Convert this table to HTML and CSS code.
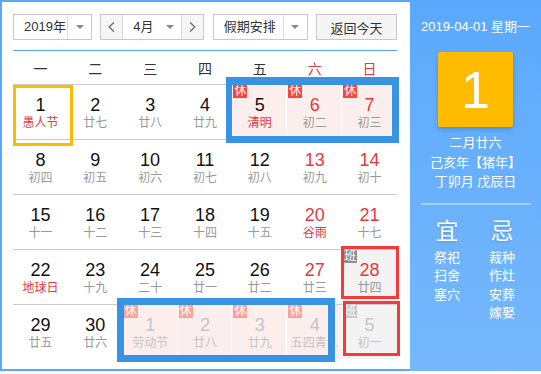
FILE: index.html
```html
<!DOCTYPE html>
<html lang="zh-CN">
<head>
<meta charset="utf-8">
<link rel="stylesheet" href="styles.css">
</head>
<body>
<div class="widget">
  <div class="main">
    <div class="toolbar">
      <div class="sel year"><span class="sel-text">2019年</span><span class="sel-arrow"><i class="tri"></i></span></div>
      <div class="month-group">
        <span class="nav prev"><svg width="7" height="10" viewBox="0 0 7 10"><polyline points="5.8,0.5 1.2,5 5.8,9.5" fill="none" stroke="#666" stroke-width="1.2"/></svg></span>
        <div class="month"><span class="sel-text">4月</span><span class="sel-arrow plain"><i class="tri"></i></span></div>
        <span class="nav next"><svg width="7" height="10" viewBox="0 0 7 10"><polyline points="1.2,0.5 5.8,5 1.2,9.5" fill="none" stroke="#666" stroke-width="1.2"/></svg></span>
      </div>
      <div class="sel holiday"><span class="sel-text">假期安排</span><span class="sel-arrow"><i class="tri"></i></span></div>
      <button class="today-btn">返回今天</button>
    </div>
    <div class="weekdays">
      <span>一</span><span>二</span><span>三</span><span>四</span><span>五</span><span class="we">六</span><span class="we">日</span>
    </div>
    <div class="days">
      <div class="week">
        <div class="cell today"><span class="num">1</span><span class="lu fest">愚人节</span></div>
        <div class="cell"><span class="num">2</span><span class="lu">廿七</span></div>
        <div class="cell"><span class="num">3</span><span class="lu">廿八</span></div>
        <div class="cell"><span class="num">4</span><span class="lu">廿九</span></div>
        <div class="cell hol"><span class="badge">休</span><span class="num">5</span><span class="lu fest">清明</span></div>
        <div class="cell hol red"><span class="badge">休</span><span class="num">6</span><span class="lu">初二</span></div>
        <div class="cell hol red"><span class="badge">休</span><span class="num">7</span><span class="lu">初三</span></div>
      </div>
      <div class="week">
        <div class="cell"><span class="num">8</span><span class="lu">初四</span></div>
        <div class="cell"><span class="num">9</span><span class="lu">初五</span></div>
        <div class="cell"><span class="num">10</span><span class="lu">初六</span></div>
        <div class="cell"><span class="num">11</span><span class="lu">初七</span></div>
        <div class="cell"><span class="num">12</span><span class="lu">初八</span></div>
        <div class="cell red"><span class="num">13</span><span class="lu">初九</span></div>
        <div class="cell red"><span class="num">14</span><span class="lu">初十</span></div>
      </div>
      <div class="week">
        <div class="cell"><span class="num">15</span><span class="lu">十一</span></div>
        <div class="cell"><span class="num">16</span><span class="lu">十二</span></div>
        <div class="cell"><span class="num">17</span><span class="lu">十三</span></div>
        <div class="cell"><span class="num">18</span><span class="lu">十四</span></div>
        <div class="cell"><span class="num">19</span><span class="lu">十五</span></div>
        <div class="cell red"><span class="num">20</span><span class="lu fest">谷雨</span></div>
        <div class="cell red"><span class="num">21</span><span class="lu">十七</span></div>
      </div>
      <div class="week">
        <div class="cell"><span class="num">22</span><span class="lu fest">地球日</span></div>
        <div class="cell"><span class="num">23</span><span class="lu">十九</span></div>
        <div class="cell"><span class="num">24</span><span class="lu">二十</span></div>
        <div class="cell"><span class="num">25</span><span class="lu">廿一</span></div>
        <div class="cell"><span class="num">26</span><span class="lu">廿二</span></div>
        <div class="cell red"><span class="num">27</span><span class="lu">廿三</span></div>
        <div class="cell red work"><span class="badge ban">班</span><span class="num">28</span><span class="lu">廿四</span></div>
      </div>
      <div class="week last">
        <div class="cell"><span class="num">29</span><span class="lu">廿五</span></div>
        <div class="cell"><span class="num">30</span><span class="lu">廿六</span></div>
        <div class="cell hol other"><span class="badge">休</span><span class="num">1</span><span class="lu">劳动节</span></div>
        <div class="cell hol other"><span class="badge">休</span><span class="num">2</span><span class="lu">廿八</span></div>
        <div class="cell hol other"><span class="badge">休</span><span class="num">3</span><span class="lu">廿九</span></div>
        <div class="cell hol other"><span class="badge">休</span><span class="num">4</span><span class="lu">五四青<span class="ell">…</span></span></div>
        <div class="cell work other"><span class="badge ban">班</span><span class="num">5</span><span class="lu">初一</span></div>
      </div>
      <div class="mark blue mark-a"></div>
      <div class="mark blue mark-b"></div>
      <div class="mark redbox mark-c"></div>
      <div class="mark redbox mark-d"></div>
    </div>
  </div>
  <div class="side">
    <div class="side-date">2019-04-01 星期一</div>
    <div class="big-day">1</div>
    <div class="lunar-info">
      <div>二月廿六</div>
      <div>己亥年【猪年】</div>
      <div>丁卯月 戊辰日</div>
    </div>
    <div class="divider"></div>
    <div class="yiji">
      <div class="col"><div class="yj-title">宜</div><div>祭祀</div><div>扫舍</div><div>塞穴</div></div>
      <div class="col"><div class="yj-title">忌</div><div>裁种</div><div>作灶</div><div>安葬</div><div>嫁娶</div></div>
    </div>
  </div>
</div>
</body>
</html>
```
FILE: styles.css
```css
* { box-sizing: border-box; }
body {
  margin: 0;
  background: #fff;
  font-family: "Liberation Sans", "Noto Sans CJK SC", sans-serif;
}
.widget {
  display: flex;
  width: 541px;
  height: 371px;
  background: #5aa8fb;
}
.main {
  width: 408px;
  margin: 2px 0 2px 2px;
  background: #fff;
  padding: 12px 13px 0 11px;
}
.toolbar {
  display: flex;
  justify-content: space-between;
  height: 37px;
  padding-bottom: 10px;
  border-bottom: 1px solid #58a6ef;
}
.sel {
  display: flex;
  height: 26px;
  border: 1px solid #c8c8c8;
  background: #fff;
  font-size: 13px;
  color: #333;
}
.sel-text {
  flex: 1;
  padding-left: 10px;
  line-height: 24px;
  white-space: nowrap;
}
.sel-arrow {
  width: 24px;
  border-left: 1px solid #dcdcdc;
  display: flex;
  align-items: center;
  justify-content: center;
}
.sel-arrow.plain { border-left: none; width: 22px; }
.tri {
  width: 0;
  height: 0;
  border-left: 4px solid transparent;
  border-right: 4px solid transparent;
  border-top: 4px solid #888;
}
.year { width: 79px; }
.holiday { width: 95px; }
.month-group {
  display: flex;
  width: 104px;
  height: 26px;
  border: 1px solid #c8c8c8;
}
.nav {
  width: 22px;
  background: #f5f5f5;
  display: flex;
  align-items: center;
  justify-content: center;
}
.nav.prev { border-right: 1px solid #dcdcdc; }
.nav.next { border-left: 1px solid #dcdcdc; }
.month {
  flex: 1;
  display: flex;
  font-size: 13px;
  color: #333;
  background: #fff;
}
.today-btn {
  width: 81px;
  height: 26px;
  padding: 0;
  border: 1px solid #c8c8c8;
  background: #f5f5f5;
  font: 13px "Liberation Sans", "Noto Sans CJK SC", sans-serif;
  color: #333;
}
.weekdays {
  display: grid;
  grid-template-columns: repeat(7, 1fr);
  height: 34px;
  align-items: center;
  text-align: center;
  border-bottom: 1px solid #ccc;
  font-size: 14px;
  color: #333;
}
.weekdays .we { color: #e8383d; }
.days { position: relative; }
.week {
  display: grid;
  grid-template-columns: repeat(7, 1fr);
  height: 55px;
  border-bottom: 1px solid #ccc;
}
.week.last { height: 54px; border-bottom: none; }
.cell {
  position: relative;
  display: flex;
  flex-direction: column;
  align-items: center;
  padding-top: 11px;
  min-width: 0;
}
.num {
  font-size: 18px;
  line-height: 18px;
  color: #111;
}
.lu {
  font-size: 12px;
  line-height: 18px;
  color: #999;
  white-space: nowrap;
}
.ell { font-family: "Liberation Sans", sans-serif; }
.red .num { color: #e8383d; }
.lu.fest { color: #e8383d; }
.hol {
  background: #fdeeee;
  box-shadow: inset -1px 0 0 #fff;
}
.work { background: #f3f3f3; }
.other .num, .other .lu { color: #c4c4c4; }
.badge {
  position: absolute;
  left: 1px;
  top: 0;
  width: 14px;
  height: 13px;
  background: #f5463f;
  color: #fff;
  font-size: 12px;
  line-height: 13px;
  text-align: center;
  overflow: hidden;
}
.badge.ban { background: #8e8e8e; }
.other .badge { background: #f9a39d; }
.other .badge.ban { background: #c8c8c8; }
.today::after {
  content: "";
  position: absolute;
  left: 0;
  top: 0;
  width: 54px;
  height: 55px;
  border: 3px solid #ffbb00;
}
.mark { position: absolute; }
.blue { border: 7px solid #3993e3; }
.redbox { border: 3px solid #f43a3a; }
.mark-a { left: 213px; top: -8px; width: 173px; height: 66px; border-top-width: 8px; border-left-width: 6px; }
.mark-b { left: 104px; top: 213px; width: 218px; height: 64px; }
.mark-c { left: 328px; top: 161px; width: 58px; height: 53px; }
.mark-d { left: 330px; top: 216px; width: 57px; height: 55px; }

.side {
  flex: 1;
  display: flex;
  flex-direction: column;
  align-items: center;
  padding-top: 17px;
  background: linear-gradient(#5aa9fd, #77b8fc);
  color: #fff;
}
.side-date { font-size: 13px; line-height: 20px; white-space: nowrap; }
.big-day {
  margin-top: 15px;
  width: 75px;
  height: 75px;
  padding-top: 1px;
  background: #ffbb00;
  border-radius: 2px;
  box-shadow: 0 2px 4px rgba(0, 0, 0, 0.2);
  font-size: 52px;
  line-height: 75px;
  text-align: center;
}
.lunar-info {
  margin-top: 6px;
  font-size: 13px;
  line-height: 19.5px;
  text-align: center;
  white-space: nowrap;
}
.divider {
  margin-top: 11px;
  width: 110px;
  height: 2px;
  background: rgba(255, 255, 255, 0.4);
}
.yiji {
  margin-top: 12px;
  display: flex;
  padding-right: 2px;
}
.col {
  width: 55px;
  text-align: center;
  font-size: 13px;
  line-height: 18.5px;
}
.yj-title {
  font-size: 23px;
  line-height: 28px;
  margin-bottom: 4px;
  text-shadow: 0 1px 2px rgba(0, 0, 0, 0.15);
}
```
